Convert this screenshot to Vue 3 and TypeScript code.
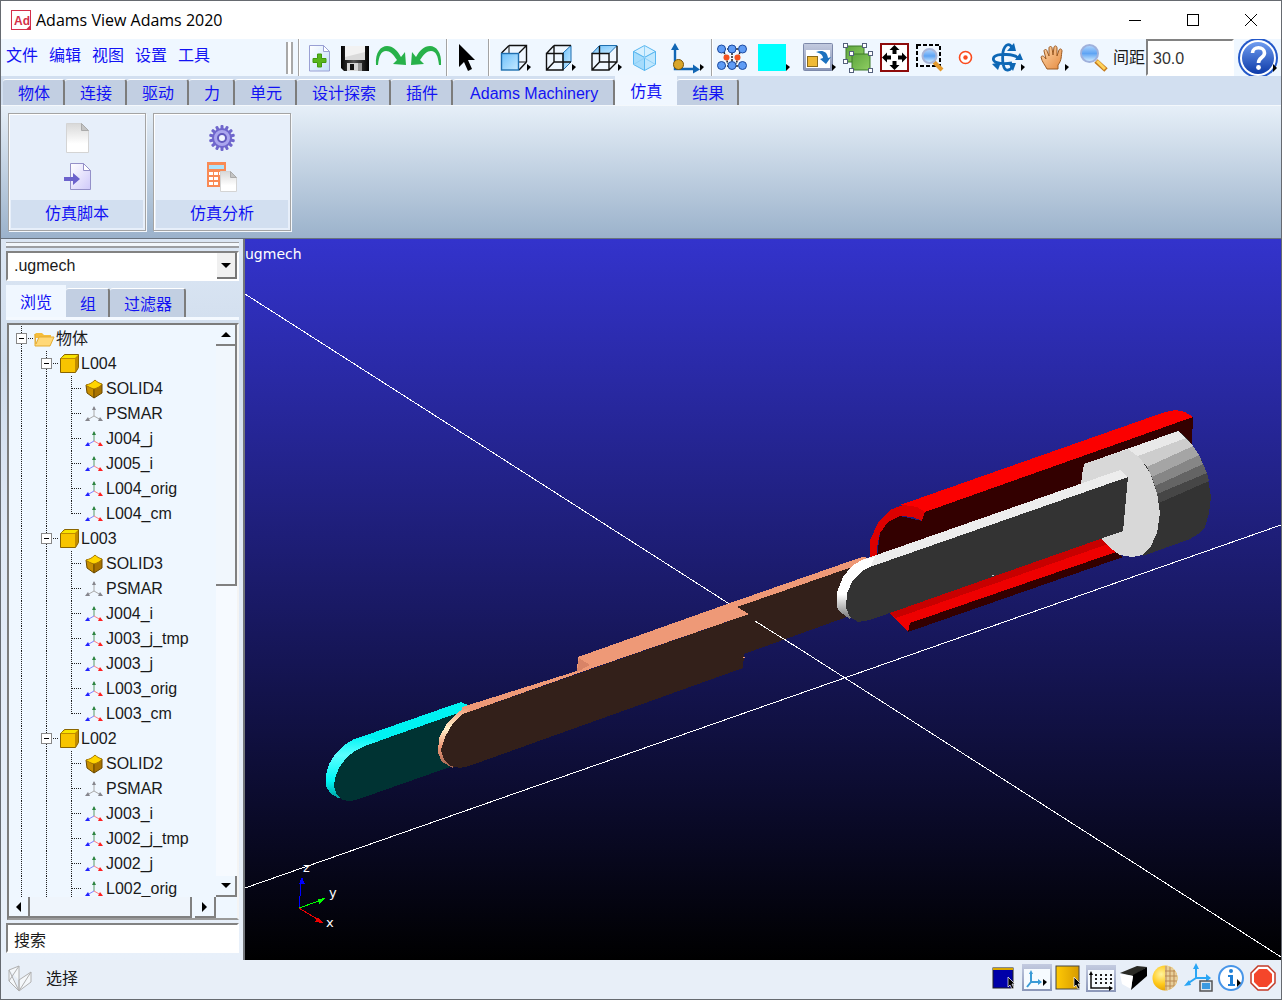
<script setup lang="ts">
import { computed, ref } from 'vue'

type IconKind = 'folder' | 'part' | 'solid' | 'marker' | 'grey-marker'

interface TreeRow {
  label: string
  level: number
  icon: IconKind
  last: boolean
}

interface Part {
  name: string
  complete: boolean
  children: string[]
}

const menus = ['文件', '编辑', '视图', '设置', '工具']

const ribbonTabs = ['物体', '连接', '驱动', '力', '单元', '设计探索', '插件', 'Adams Machinery', '仿真', '结果']
const activeRibbon = ref('仿真')

const browserTabs = ['浏览', '组', '过滤器']
const activeBrowser = ref('浏览')

const model = ref('.ugmech')
const spacing = ref('30.0')
const search = ref('搜索')

const parts: Part[] = [
  { name: 'L004', complete: true, children: ['SOLID4', 'PSMAR', 'J004_j', 'J005_i', 'L004_orig', 'L004_cm'] },
  { name: 'L003', complete: true, children: ['SOLID3', 'PSMAR', 'J004_i', 'J003_j_tmp', 'J003_j', 'L003_orig', 'L003_cm'] },
  { name: 'L002', complete: false, children: ['SOLID2', 'PSMAR', 'J003_i', 'J002_j_tmp', 'J002_j', 'L002_orig'] },
]

function iconFor(name: string): IconKind {
  if (name.startsWith('SOLID')) return 'solid'
  if (name === 'PSMAR') return 'grey-marker'
  return 'marker'
}

const rows = computed<TreeRow[]>(() => {
  const out: TreeRow[] = [{ label: '物体', level: 0, icon: 'folder', last: false }]
  for (const part of parts) {
    out.push({ label: part.name, level: 1, icon: 'part', last: false })
    part.children.forEach((child, i) => {
      out.push({
        label: child,
        level: 2,
        icon: iconFor(child),
        last: part.complete && i === part.children.length - 1,
      })
    })
  }
  return out
})

const gearTeeth = Array.from({ length: 14 }, (_, i) => (i * 360) / 14)
</script>

<template>
  <div class="app">
    <svg class="defs" width="0" height="0" aria-hidden="true">
      <defs>
        <linearGradient id="gPage" x1="0" y1="0" x2="1" y2="1"><stop offset="0" stop-color="#fff" /><stop offset="1" stop-color="#c4dffb" /></linearGradient>
        <linearGradient id="gGreyPage" x1="0" y1="0" x2="0" y2="1"><stop offset="0" stop-color="#d8d8d8" /><stop offset="0.7" stop-color="#fff" /></linearGradient>
        <linearGradient id="gLilac" x1="0" y1="0" x2="1" y2="1"><stop offset="0" stop-color="#fff" /><stop offset="1" stop-color="#cfc9fa" /></linearGradient>
        <linearGradient id="gFace" x1="0" y1="0" x2="1" y2="1"><stop offset="0" stop-color="#6cc0fb" /><stop offset="1" stop-color="#c8eaff" /></linearGradient>
        <linearGradient id="gGreen" x1="0" y1="0" x2="1" y2="1"><stop offset="0" stop-color="#5ea53e" /><stop offset="1" stop-color="#8fce62" /></linearGradient>
        <linearGradient id="gBar" x1="0" y1="0" x2="0" y2="1"><stop offset="0" stop-color="#c3cbe0" /><stop offset="1" stop-color="#8b97b8" /></linearGradient>
        <linearGradient id="gGold" x1="0" y1="0" x2="1" y2="0"><stop offset="0" stop-color="#ffc905" /><stop offset="1" stop-color="#d79b00" /></linearGradient>
        <linearGradient id="gHelp" x1="0" y1="0" x2="0" y2="1"><stop offset="0" stop-color="#6f9cf0" /><stop offset="1" stop-color="#0d3aa8" /></linearGradient>
        <linearGradient id="gHand" x1="0" y1="0" x2="1" y2="1"><stop offset="0" stop-color="#ffd9ae" /><stop offset="1" stop-color="#e58a3e" /></linearGradient>
        <linearGradient id="gLens" x1="0" y1="0" x2="0" y2="1"><stop offset="0" stop-color="#b5d8fd" /><stop offset="0.5" stop-color="#5ea4f4" /><stop offset="1" stop-color="#daf1ff" /></linearGradient>
        <linearGradient id="gFloppy" x1="0" y1="0" x2="1" y2="0"><stop offset="0" stop-color="#000" /><stop offset="0.45" stop-color="#555" /><stop offset="1" stop-color="#000" /></linearGradient>
        <radialGradient id="gBall" cx="0.35" cy="0.35" r="0.8"><stop offset="0" stop-color="#fff3a0" /><stop offset="0.5" stop-color="#ffc91a" /><stop offset="1" stop-color="#d89000" /></radialGradient>
      </defs>
    </svg>

    <header class="titlebar">
      <svg class="logo" width="21" height="20" viewBox="0 0 21 20">
        <rect x="1.500" y="0.500" width="19" height="19" fill="#fff" stroke="#d32f4a" stroke-width="1" />
        <path d="M16 19.500h4.500v-4.500z" fill="#d32f4a" />
        <text x="4" y="15" class="logo-text">Ad</text>
      </svg>
      <h1>Adams View Adams 2020</h1>
      <div class="window-buttons">
        <button type="button" aria-label="Minimize"><svg width="12" height="12" viewBox="0 0 12 12"><path d="M0 6.500h12" stroke="#000" /></svg></button>
        <button type="button" aria-label="Maximize"><svg width="12" height="12" viewBox="0 0 12 12"><rect x="0.500" y="0.500" width="11" height="11" fill="none" stroke="#000" /></svg></button>
        <button type="button" aria-label="Close"><svg width="12" height="12" viewBox="0 0 12 12"><path d="M0 0l12 12M12 0L0 12" stroke="#000" /></svg></button>
      </div>
    </header>

    <div class="toolbar">
      <nav class="menus">
        <button v-for="m in menus" :key="m" type="button">{{ m }}</button>
      </nav>
      <span class="grip"></span>
      <span class="sep"></span>
      <div class="tools">
        <button type="button" aria-label="New">
          <svg width="36" height="36" viewBox="0 0 36 36">
            <path d="M8.500 5.500h14l6 6v19.500h-20z" fill="url(#gPage)" stroke="#9aa0d4" />
            <path d="M22.500 5.500v6h6z" fill="#fff" stroke="#9aa0d4" />
            <path d="M16.500 14h4v4.500H25v4h-4.500V27h-4v-4.500H12v-4h4.500z" fill="#58b51c" stroke="#3f9a0c" />
          </svg>
        </button>
        <button type="button" aria-label="Save">
          <svg width="36" height="36" viewBox="0 0 36 36">
            <path d="M4 6h28v25H7l-3-3z" fill="url(#gFloppy)" />
            <rect x="8" y="6" width="20" height="14" fill="#f2f2f2" />
            <path d="M8 17l20-5v8H8z" fill="#dadada" />
            <rect x="10" y="23" width="15" height="8" fill="#d6d6d6" />
            <rect x="13" y="24" width="4" height="6" fill="#111" />
            <rect x="21" y="23" width="4" height="8" fill="#999" />
          </svg>
        </button>
        <button type="button" aria-label="Redo">
          <svg width="36" height="36" viewBox="0 0 36 36">
            <path d="M3 25C2 12 8 6 14 6c6 0 10 4 14 11l4-5 1 13-13-1 4-4C20 14 17 11 13 11c-5 0-7 5-8 14z" fill="#27b14a" />
          </svg>
        </button>
        <button type="button" aria-label="Undo">
          <svg width="36" height="36" viewBox="0 0 36 36">
            <path d="M32 25C33 12 27 6 21 6c-6 0-10 4-14 11l-4-5-1 13 13-1-4-4c4-6 7-9 11-9 5 0 7 5 8 14z" fill="#27b14a" />
          </svg>
        </button>
      </div>
      <span class="sep"></span>
      <div class="tools pointer">
        <button type="button" aria-label="Select">
          <svg width="36" height="36" viewBox="0 0 36 36"><path d="M9 4v23l5-5 4 9 4-2-4-9h7z" fill="#000" /></svg>
        </button>
      </div>
      <span class="sep"></span>
      <div class="tools views">
        <button type="button" class="drop" aria-label="Front view">
          <svg width="45" height="36" viewBox="0 0 45 36">
            <path d="M18 5.500h17.500V22M35.500 5.500L28 13M35.500 22L28 30M18 5.500L10.500 13" fill="none" stroke="#111" stroke-width="1.400" />
            <path d="M18 6v16h17" fill="none" stroke="#111" />
            <rect x="10.500" y="13.500" width="17" height="16.500" fill="url(#gFace)" stroke="#1f6fb0" stroke-width="1.400" />
            <path d="M36 24l4 3-4 4z" />
          </svg>
        </button>
        <button type="button" class="drop" aria-label="Right view">
          <svg width="45" height="36" viewBox="0 0 45 36">
            <path d="M35 5.500L27 13v17l8-8z" fill="url(#gFace)" stroke="#1f6fb0" />
            <path d="M10.500 13.500H27V30H10.500zM18 5.500h17M18 5.500L10.500 13.500M18 6v16h17M18 22l-7.500 8" fill="none" stroke="#111" stroke-width="1.400" />
            <path d="M36 24l4 3-4 4z" />
          </svg>
        </button>
        <button type="button" class="drop" aria-label="Top view">
          <svg width="45" height="36" viewBox="0 0 45 36">
            <path d="M18.500 5.500H36L28 13.500H11z" fill="url(#gFace)" stroke="#1f6fb0" />
            <path d="M11 13.500h17V30H11zM36 6v16l-8 8M18.500 6v16H36M18.500 22L11 30" fill="none" stroke="#111" stroke-width="1.400" />
            <path d="M37 24l4 3-4 4z" />
          </svg>
        </button>
        <button type="button" aria-label="Isometric view">
          <svg width="36" height="36" viewBox="0 0 36 36" stroke="#59b7f0">
            <path d="M18.500 5.500l11 6-11 6-11-6z" fill="#d6f0ff" />
            <path d="M7.500 11.500l11 6v13l-11-6z" fill="#a5dcfc" />
            <path d="M29.500 11.500l-11 6v13l11-6z" fill="#bfe7fe" />
            <path d="M18.500 18l-11 6.500M18.500 18l11 6.500M18.500 6v12" stroke="#8ed0f8" />
          </svg>
        </button>
        <button type="button" class="drop" aria-label="Set origin">
          <svg width="45" height="36" viewBox="0 0 45 36">
            <path d="M13 8v21H33" fill="none" stroke="#1166b4" stroke-width="2.400" />
            <path d="M13 3l4 7H9zM38 29.500l-7-5v9z" fill="#1166b4" />
            <circle cx="16.500" cy="24.500" r="5" fill="#d9a62a" stroke="#7a5408" />
            <path d="M38 24l4 3-4 4z" />
          </svg>
        </button>
      </div>
      <span class="sep"></span>
      <div class="tools">
        <button type="button" aria-label="Working grid">
          <svg width="36" height="36" viewBox="0 0 36 36">
            <path d="M7 9h22M7 26h22M10 12l4 12M26 12l-4 12M18 10v14" stroke="#222" stroke-width="1.500" stroke-dasharray="2 1" />
            <g fill="#5f9cf5" stroke="#1c4aa0"><circle cx="7.500" cy="9" r="4" /><circle cx="18" cy="9" r="4" /><circle cx="28.500" cy="9" r="4" /><circle cx="7.500" cy="25.500" r="4" /><circle cx="18" cy="25.500" r="4" /><circle cx="28.500" cy="25.500" r="4" /></g>
            <g fill="#f4511e"><circle cx="12.500" cy="17.500" r="3" /><circle cx="23.500" cy="17.500" r="3" /></g>
          </svg>
        </button>
        <button type="button" class="drop" aria-label="Colour">
          <svg width="45" height="36" viewBox="0 0 45 36"><rect x="8" y="4" width="28" height="27" fill="#00ffff" /><path d="M36 24l4 3-4 4z" /></svg>
        </button>
        <button type="button" class="drop" aria-label="Layout">
          <svg width="45" height="36" viewBox="0 0 45 36">
            <rect x="8.500" y="3.500" width="29" height="27" rx="1" fill="url(#gBar)" stroke="#7d89aa" />
            <rect x="11" y="10" width="24" height="18" fill="#fff" />
            <rect x="12.500" y="16.500" width="10" height="10" fill="#efb935" stroke="#8a6a1c" />
            <path d="M21 12c6-2 11-1 12 6l3-1-5 7-6-5 3-1c0-3-3-5-7-6z" fill="#1c72bf" />
            <path d="M37 24l4 3-4 4z" />
          </svg>
        </button>
        <button type="button" aria-label="Group">
          <svg width="36" height="36" viewBox="0 0 36 36">
            <rect x="6" y="6" width="18" height="16" fill="url(#gGreen)" stroke="#3d7a2a" />
            <rect x="12" y="14" width="18" height="16" fill="url(#gGreen)" stroke="#3d7a2a" />
            <g fill="#fff" stroke="#54617c"><rect x="3.500" y="3.500" width="4" height="4" /><rect x="22.500" y="3.500" width="4" height="4" /><rect x="3.500" y="19.500" width="4" height="4" /><rect x="9.500" y="11.500" width="4" height="4" /><rect x="28.500" y="11.500" width="4" height="4" /><rect x="9.500" y="28.500" width="4" height="4" /><rect x="28.500" y="28.500" width="4" height="4" /></g>
          </svg>
        </button>
        <button type="button" aria-label="Fit to view">
          <svg width="36" height="36" viewBox="0 0 36 36">
            <rect x="5" y="4" width="27" height="27" fill="#fff" stroke="#8e0b0b" stroke-width="2" />
            <path d="M18.500 5l5 5h-3v4h-4v-4h-3zM18.500 30l5-5h-3v-4h-4v4h-3zM6 17.500l5-5v3h4v4h-4v3zM31 17.500l-5-5v3h-4v4h4v3z" fill="#000" />
          </svg>
        </button>
        <button type="button" aria-label="Zoom area">
          <svg width="36" height="36" viewBox="0 0 36 36">
            <rect x="5" y="5" width="23" height="21" fill="none" stroke="#000" stroke-width="2" stroke-dasharray="4 2" />
            <path d="M22 22l8 8" stroke="#e59a2c" stroke-width="4" />
            <circle cx="17.500" cy="16" r="7" fill="url(#gLens)" stroke="#a9b6d8" stroke-width="2" />
          </svg>
        </button>
        <button type="button" aria-label="Centre">
          <svg width="36" height="36" viewBox="0 0 36 36"><circle cx="17.500" cy="17.500" r="6" fill="#fff" stroke="#fa4b1e" stroke-width="1.600" /><circle cx="17.500" cy="17.500" r="2.200" fill="#fa4b1e" /></svg>
        </button>
        <button type="button" class="drop" aria-label="Rotate">
          <svg width="45" height="36" viewBox="0 0 45 36">
            <path d="M28 8C26 3 21 3 19 12c-1 9 0 19 5 18 3 0 4-3 4-5M34 18c-3-4-20-5-24-1-3 5 5 8 18 6" fill="none" stroke="#0d67b5" stroke-width="2.800" />
            <path d="M23 11h9l-2-8zM31 20h8l-3-7zM24 23h8l-3 8zM8 24l9-2-3 8z" fill="#0d67b5" />
            <path d="M37 24l4 3-4 4z" />
          </svg>
        </button>
        <button type="button" class="drop" aria-label="Pan">
          <svg width="45" height="36" viewBox="0 0 45 36">
            <path d="M18 29c-2-4-5-7-6-12 1-2 3-1 5 2l-2-8c0-2 3-2 3 0l2 5V8c0-2 3-2 3 0l1 7 1-8c1-2 3-1 3 1v8l2-6c1-2 3-1 3 1-1 5 0 9-4 14v4z" fill="url(#gHand)" stroke="#9c5a22" />
            <path d="M36 24l4 3-4 4z" />
          </svg>
        </button>
        <button type="button" aria-label="Zoom">
          <svg width="36" height="36" viewBox="0 0 36 36">
            <path d="M22 21l10 9" stroke="#c47a1c" stroke-width="5" /><path d="M23 21l8 8" stroke="#ffd25a" stroke-width="3" />
            <circle cx="15.500" cy="13.500" r="8.500" fill="url(#gLens)" stroke="#9fb1dc" stroke-width="2" />
          </svg>
        </button>
      </div>
      <label class="spacing-label" for="spacing">间距</label>
      <input id="spacing" v-model="spacing" class="spacing" type="text" />
      <button type="button" class="help" aria-label="Help">
        <svg width="42" height="38" viewBox="0 0 42 38">
          <circle cx="20" cy="19" r="20" fill="#2358c9" /><circle cx="20" cy="19" r="18" fill="#fff" /><circle cx="20" cy="19" r="16" fill="url(#gHelp)" />
          <path d="M14.500 14c0-7 12-7 12 0 0 5-6 4-6 10" fill="none" stroke="#fff" stroke-width="3.600" /><circle cx="20.500" cy="28.500" r="2.400" fill="#fff" />
          <path d="M35 25l4 4-4 4z" />
        </svg>
      </button>
    </div>

    <div class="tabbar" role="tablist">
      <button
        v-for="t in ribbonTabs" :key="t" type="button" role="tab" class="tab"
        :class="{ active: t === activeRibbon, wide: t === 'Adams Machinery' }"
        :aria-selected="t === activeRibbon" @click="activeRibbon = t"
      >{{ t }}</button>
    </div>

    <section class="ribbon">
      <div class="group">
        <div class="group-icons">
          <button type="button" aria-label="New script">
            <svg width="32" height="32" viewBox="0 0 32 32"><path d="M5.500 1.500h15l7 7v22h-22z" fill="url(#gGreyPage)" stroke="#d4d4d4" /><path d="M20.500 1.500v7h7z" fill="#c4c4c4" stroke="#aaa" /></svg>
          </button>
          <button type="button" aria-label="Import script">
            <svg width="32" height="32" viewBox="0 0 32 32"><path d="M9.500 2.500h13l7 7v19h-20z" fill="url(#gLilac)" stroke="#9490c8" /><path d="M22.500 2.500v7h7z" fill="#fff" stroke="#9490c8" /><path d="M3 16h9v-4l7 6-7 6v-4H3z" fill="#6c62cc" /></svg>
          </button>
        </div>
        <div class="group-label">仿真脚本</div>
      </div>
      <div class="group">
        <div class="group-icons">
          <button type="button" aria-label="Run simulation">
            <svg width="32" height="32" viewBox="0 0 32 32">
              <g fill="#6f66cc"><rect v-for="a in gearTeeth" :key="a" x="14.500" y="3" width="3" height="6" rx="1" :transform="`rotate(${a} 16 16)`" /></g>
              <circle cx="16" cy="16" r="9" fill="#aaa5ee" stroke="#6f66cc" stroke-width="2" /><circle cx="16" cy="16" r="4" fill="#f0f4ff" stroke="#6158be" stroke-width="2" />
            </svg>
          </button>
          <button type="button" aria-label="Calculate">
            <svg width="32" height="32" viewBox="0 0 32 32">
              <rect x="1" y="1" width="19" height="25" fill="#f98a55" /><rect x="3" y="4" width="15" height="4" fill="#aee3fb" />
              <g fill="#fff"><rect x="3" y="11" width="4" height="3" /><rect x="8" y="11" width="4" height="3" /><rect x="13" y="11" width="4" height="3" /><rect x="3" y="16" width="4" height="3" /><rect x="8" y="16" width="4" height="3" /><rect x="3" y="21" width="4" height="3" /><rect x="8" y="21" width="4" height="3" /></g>
              <path d="M14.500 10.500h10l6 6v14h-16z" fill="url(#gGreyPage)" stroke="#d4d4d4" /><path d="M24.500 10.500v6h6z" fill="#c4c4c4" stroke="#aaa" />
            </svg>
          </button>
        </div>
        <div class="group-label">仿真分析</div>
      </div>
    </section>

    <main class="workspace">
      <aside class="sidebar">
        <div class="side-grip"></div>
        <div class="combo">
          <select v-model="model" aria-label="Model"><option>.ugmech</option></select>
          <span class="combo-arrow"><svg width="10" height="5" viewBox="0 0 10 5"><path d="M0 0h10L5 5z" /></svg></span>
        </div>
        <div class="side-tabs" role="tablist">
          <button
            v-for="t in browserTabs" :key="t" type="button" role="tab" class="tab side"
            :class="{ active: t === activeBrowser }" :aria-selected="t === activeBrowser" @click="activeBrowser = t"
          >{{ t }}</button>
        </div>
        <div class="tree-box">
          <div class="tree-main">
            <ul class="tree">
              <li v-for="(r, i) in rows" :key="i" class="row">
                <span v-for="n in r.level" :key="n" class="cell line"></span>
                <span v-if="r.level < 2" class="cell node line"><i class="dots"></i><b class="box"></b></span>
                <span v-else class="cell line" :class="{ end: r.last }"><i class="dots"></i></span>
                <svg v-if="r.icon === 'folder'" class="ticon" width="22" height="24" viewBox="0 0 22 24"><path d="M1 7l1-1h6l2 2h7v3H1z" fill="#f5bd3b" /><path d="M1 7v12h15l4-9H5l-3 7z" fill="#ffd878" stroke="#e5ad33" /></svg>
                <svg v-else-if="r.icon === 'part'" class="ticon" width="22" height="24" viewBox="0 0 22 24"><path d="M1.500 6.500l4-4h14v13l-3 5h-15z" fill="#c18c00" stroke="#8a6500" /><path d="M2 6l4-3h13l-3 3z" fill="#f8e300" /><rect x="2" y="7" width="14" height="13" fill="#f8c400" /></svg>
                <svg v-else-if="r.icon === 'solid'" class="ticon" width="22" height="24" viewBox="0 0 22 24"><path d="M2 8l8 4v9l-7-5z" fill="#c98f00" stroke="#6c4b00" /><path d="M10 12l8-5v9l-8 5z" fill="#a87200" stroke="#6c4b00" /><path d="M2 8c4-1 6-2 9-5 2 2 4 3 7 4-2 3-5 4-8 5-3-1-6-2-8-4z" fill="#ffd500" stroke="#a87800" /></svg>
                <svg v-else class="ticon" :class="r.icon" width="22" height="24" viewBox="0 0 22 24">
                  <path class="az" d="M10 14V5" /><path class="ax" d="M10 14l7 4" /><path class="ay" d="M10 14l-7 4" />
                  <path class="fz" d="M8 8l2-4 2 4z" /><path class="fx" d="M14 19l5 0-3-4z" /><path class="fy" d="M4 15l-3 4 5 0z" />
                </svg>
                <span class="tlabel">{{ r.label }}</span>
              </li>
            </ul>
            <div class="vscroll">
              <button type="button" class="sbtn" aria-label="Scroll up"><svg width="10" height="5" viewBox="0 0 10 5"><path d="M0 5h10L5 0z" /></svg></button>
              <div class="vthumb"></div>
              <div class="vtrack"></div>
              <button type="button" class="sbtn" aria-label="Scroll down"><svg width="10" height="5" viewBox="0 0 10 5"><path d="M0 0h10L5 5z" /></svg></button>
            </div>
          </div>
          <div class="hscroll">
            <button type="button" class="sbtn" aria-label="Scroll left"><svg width="5" height="10" viewBox="0 0 5 10"><path d="M5 0v10L0 5z" /></svg></button>
            <div class="hthumb"></div>
            <button type="button" class="sbtn" aria-label="Scroll right"><svg width="5" height="10" viewBox="0 0 5 10"><path d="M0 0v10l5-5z" /></svg></button>
          </div>
        </div>
        <input v-model="search" class="search" type="text" aria-label="搜索" />
      </aside>

      <section class="viewport">
        <svg class="scene" viewBox="245 239 1036 721" preserveAspectRatio="xMidYMid slice" shape-rendering="crispEdges">
          <defs>
            <linearGradient id="rimW" x1="0" y1="0" x2="0" y2="1"><stop offset="0.6" stop-color="#fff" /><stop offset="1" stop-color="#777" /></linearGradient>
            <linearGradient id="rimC" x1="0" y1="0" x2="0" y2="1"><stop offset="0" stop-color="#00f4f4" /><stop offset="0.3" stop-color="#5cffff" /><stop offset="0.7" stop-color="#00f6f6" /><stop offset="1" stop-color="#009a9a" /></linearGradient>
            <linearGradient id="rimS" x1="0" y1="0" x2="0" y2="1"><stop offset="0" stop-color="#ee9877" /><stop offset="0.35" stop-color="#fff2cc" /><stop offset="0.65" stop-color="#ee9877" /><stop offset="1" stop-color="#9b6350" /></linearGradient>
          </defs>
          <text x="245" y="259" class="scene-text big">ugmech</text>
          <path d="M245 294L1281 957M245 888L1281 525" stroke="#fff" stroke-width="1" />

          <polygon points="352,740 461,702 470,706 470,712 458,713 356,749" fill="#00f2f2" />
          <path d="M365 736L353 740 344 745 336 753 329 764 326 775V786L330 793 338 798 350 800 362 749 380 742z" fill="url(#rimC)" />
          <polygon points="365,746 355,751 346,758 339,768 335,778 334,787 337,795 342,800 349,801 356,800 450,767 470,710 458,713" fill="#003333" />

          <polygon points="578,657 730,603 862,557 870,558 870,566 737,607 749,614 590,669 463,714 462,707 577,671" fill="#ee9977" />
          <polygon points="579,658 590,665 577,672" fill="#d98467" />
          <path d="M471 707L460 711 447 723 439 738 438 753 442 762 453 768 466 714z" fill="url(#rimS)" />
          <polygon points="463,714 749,614 737,607 858,565 880,565 880,605 744,654 743,668 469,766 460,768 451,766 444,760 441,750 445,737 453,723" fill="#33201a" />
          <path d="M755 621L798 648" stroke="#fff" stroke-width="1" />

          <polygon points="877,557 880,533 888,522 900,516 922,521 925,512 1193,417 1192,442 1170,520 877,590" fill="#330000" />
          <polygon points="900,505 1165,412 1175,410 1185,412 1193,417 925,512 914,508" fill="#fb0000" />
          <polygon points="870,558 870,540 878,523 890,510 903,505 917,507 925,512 922,521 913,517 900,516 888,522 880,533 877,547 877,558" fill="#dd0000" />
          <polygon points="889,613 1100,538 1116,552 910,623 908,632" fill="#ee0000" />
          <polygon points="889,613 1100,538 1108,544 896,618" fill="#c80000" />
          <polygon points="910,623 1116,552 1123,557 908,632" fill="#330000" />

          <polygon points="1128,449 1177,431 1181,433 1190,442 1200,457 1207,473 1211,497 1209,513 1205,527 1198,534 1190,539 1143,556" fill="#333" />
          <polygon points="1084,464 1178,431 1186,438 1140,458" fill="#e9e9e9" />
          <polygon points="1138,456 1186,438 1193,446 1147,467" fill="#cdcdcd" />
          <polygon points="1147,467 1193,446 1199,455 1152,477" fill="#a5a5a5" />
          <polygon points="1152,477 1199,455 1203,464 1155,486" fill="#868686" />
          <polygon points="1155,486 1203,464 1207,473 1157,494" fill="#646464" />
          <polygon points="1157,494 1207,473 1209,481 1159,503" fill="#464646" />
          <polygon points="1084,464 1128,449 1140,458 1150,473 1157,493 1160,513 1157,533 1150,548 1142,555 1132,557 1120,555 1110,548 1100,538 1081,485 1082,475" fill="#d8d8d8" />

          <polygon points="862,560 1120,470 1128,477 870,568" fill="#ededed" />
          <path d="M875 557L862 560 852 566 843 577 837 592V607L840 612 850 619 870 568z" fill="url(#rimW)" />
          <polygon points="870,567 1128,477 1123,531 870,620 858,622 850,617 846,608 847,593 853,580 862,571" fill="#333" />
          <rect x="992" y="575" width="2" height="1" fill="#ccc" />
          <rect x="743" y="657" width="2" height="1" fill="#ee9977" />

          <path d="M299 908L301 884" stroke="#00f" stroke-width="1" /><path d="M302 877l3 7h-6z" fill="#00f" />
          <path d="M299 908l20-7" stroke="#0f0" stroke-width="1" /><path d="M326 898l-7 6-1-5z" fill="#0f0" />
          <path d="M299 908l18 11" stroke="#e00" stroke-width="1" /><path d="M323 923l-8-1 3-5z" fill="#e00" />
          <text x="303" y="872" class="scene-text">z</text>
          <text x="329" y="897" class="scene-text">y</text>
          <text x="326" y="927" class="scene-text">x</text>
        </svg>
      </section>
    </main>

    <footer class="statusbar">
      <svg width="26" height="28" viewBox="0 0 26 28"><path d="M2 6l10-4v25L2 17zM2 6l10 21 12-9V8l-12 8M12 27L24 8M2 17L12 2M12 16v11" fill="#fbfbfb" fill-opacity="0.600" stroke="#b0b0b0" /></svg>
      <span class="status-text">选择</span>
      <div class="status-icons">
        <button type="button" aria-label="Background"><svg width="32" height="32" viewBox="0 0 32 32"><rect x="2" y="6" width="20" height="20" fill="#0000a8" stroke="#222" /><path d="M2 7h20" stroke="#d9a800" stroke-width="2" /><path d="M17 15v10l2-2 2 4 2-1-2-4h3z" fill="#000" stroke="#fff" stroke-width="0.700" /></svg></button>
        <button type="button" aria-label="Triad"><svg width="32" height="32" viewBox="0 0 32 32"><rect x="-1" y="2" width="30" height="27" fill="url(#gBar)" /><rect x="1" y="7" width="26" height="20" fill="#f6fbff" /><path d="M8 11v9h9M8 20l-4 5" fill="none" stroke="#3a9bd6" stroke-width="2" /><path d="M6 12l2-4 2 4zM15 17l4 3-4 3z" fill="#3a9bd6" /><path d="M20 17l4 3-4 4z" /></svg></button>
        <button type="button" aria-label="Colour window"><svg width="32" height="32" viewBox="0 0 32 32"><rect x="1" y="4" width="23" height="23" fill="url(#gGold)" stroke="#444" /><path d="M19 15v10l2-2 2 4 2-1-2-4h3z" fill="#000" stroke="#fff" stroke-width="0.700" /></svg></button>
        <button type="button" aria-label="Grid"><svg width="32" height="32" viewBox="0 0 32 32"><rect x="-1" y="3" width="30" height="27" fill="url(#gBar)" /><rect x="1" y="8" width="26" height="20" fill="#f6fbff" /><path d="M4 12v14h19" fill="none" stroke="#111" stroke-width="1.500" /><path d="M2 13l2-4 2 4zM22 24l4 2-4 3z" /><path d="M9 12v12M14 12v12M19 12v12M24 12v10" stroke="#222" stroke-width="2" stroke-dasharray="2 2" /></svg></button>
        <button type="button" aria-label="Perspective"><svg width="32" height="32" viewBox="0 0 32 32"><path d="M1 11l17-7 10 1-14 9z" fill="#2a2a24" /><path d="M14 13l14-8v9L12 28z" fill="#000" /><path d="M1 12l13 2-2 13-9-5z" fill="#fff" /></svg></button>
        <button type="button" aria-label="Shading"><svg width="32" height="32" viewBox="0 0 32 32"><circle cx="14" cy="16" r="12.500" fill="url(#gBall)" /><path d="M14 3.500a12.500 12.500 0 0 1 0 25z" fill="#e8cf9a" /><path d="M15 4v24M19 5v22M23 8v16M14 9h10M14 14h12M14 19h12M14 24h9" stroke="#b98a54" /></svg></button>
        <button type="button" aria-label="Coordinates"><svg width="32" height="32" viewBox="0 0 32 32"><path d="M13 16V5M13 16h11M13 16L4 22" stroke="#2aa6f5" stroke-width="2" /><path d="M10 7l3-6 3 6zM23 12l5 4-5 4zM6 18l-5 6 7-1z" fill="#2aa6f5" /><rect x="17" y="19" width="12" height="10" fill="#d8e4ee" stroke="#555" stroke-width="1.500" /><rect x="19" y="21" width="8" height="6" fill="#3b9ae0" /></svg></button>
        <button type="button" aria-label="Information"><svg width="32" height="32" viewBox="0 0 32 32"><circle cx="16" cy="16" r="12" fill="#fff" stroke="#4795e8" stroke-width="2" /><circle cx="16" cy="9" r="2" fill="#1f7fd6" /><path d="M13 13h5v9h2v2h-7v-2h2v-7h-2z" fill="#1f7fd6" /><path d="M22 17l4 4-4 4z" /></svg></button>
        <button type="button" aria-label="Stop"><svg width="32" height="32" viewBox="0 0 32 32"><path d="M11 4h10l7 7v10l-7 7H11l-7-7V11z" fill="#fff" stroke="#c33a26" stroke-width="1.500" /><path d="M12 7h8l5 5v8l-5 5h-8l-5-5v-8z" fill="#f4462a" /></svg></button>
      </div>
    </footer>
  </div>
</template>

<style>
body {
  margin: 0;
}
</style>

<style scoped>
* {
  box-sizing: border-box;
}
.app {
  display: flex;
  flex-direction: column;
  height: 100vh;
  min-height: 600px;
  overflow: hidden;
  border: 1px solid #666a70;
  background: #e8eff8;
  color: #1a1a1a;
  font: 16px/20px "Liberation Sans", "Noto Sans CJK SC", sans-serif;
}
.defs {
  position: absolute;
}
button {
  margin: 0;
  padding: 0;
  border: 0;
  background: none;
  color: inherit;
  font: inherit;
}
svg {
  display: block;
  flex: none;
}
.titlebar {
  display: flex;
  align-items: center;
  height: 38px;
  flex: none;
  padding: 0 1px 0 9px;
  background: #fff;
  color: #000;
}
.logo-text {
  font: bold 12px "Liberation Sans", sans-serif;
  fill: #d32f4a;
}
h1 {
  margin: 0 0 0 5px;
  font: 16px/24px "Open Sans", "Noto Sans", sans-serif;
}
.window-buttons {
  display: flex;
  margin-left: auto;
}
.window-buttons button {
  display: flex;
  align-items: center;
  justify-content: center;
  width: 58px;
  height: 38px;
}
.toolbar {
  display: flex;
  align-items: center;
  height: 37px;
  flex: none;
  background: #eff7ff;
}
.menus {
  display: flex;
  gap: 11px;
  width: 285px;
  padding: 0 0 3px 5px;
  flex: none;
}
.menus button {
  color: #1212f4;
}
.grip {
  width: 7px;
  height: 32px;
  flex: none;
  margin-right: 4px;
  border: solid #a8a8a8;
  border-width: 0 2px;
  background: #fff;
}
.sep {
  width: 4px;
  align-self: stretch;
  flex: none;
  border-left: 1px solid #eff7ff;
  background: linear-gradient(to right, #a3a3a3 1px, #fff 1px 2px, transparent 2px);
}
.tools {
  display: flex;
  flex: none;
}
.tools button {
  width: 36px;
  height: 36px;
}
.tools button.drop {
  width: 45px;
}
.pointer {
  padding: 0 1px;
}
.views {
  padding-right: 3px;
}
.spacing-label {
  flex: none;
  margin: 0 1px 0 3px;
  white-space: nowrap;
}
.spacing {
  align-self: flex-start;
  width: 88px;
  height: 37px;
  flex: none;
  padding: 3px 5px 0;
  border: solid #fff;
  border-width: 2px;
  border-top-color: #828282;
  border-left-color: #828282;
  background: #fff;
  color: #333;
  font: inherit;
}
.help {
  margin-left: auto;
  width: 43px;
  height: 37px;
  flex: none;
  overflow: hidden;
}
.tabbar {
  display: flex;
  align-items: flex-end;
  height: 30px;
  flex: none;
  padding-left: 2px;
  background: #d2dff0;
  border-bottom: 1px solid #f4f8fc;
}
.tab {
  height: 26px;
  padding: 2px 13px 0 15px;
  border: solid #fff;
  border-width: 1px 0 0;
  border-right: 2px solid #7c7c7c;
  border-radius: 3px 3px 0 0;
  background: #c2cfe2;
  color: #1212f4;
  white-space: nowrap;
}
.tab.active {
  height: 30px;
  padding: 2px 15px 0;
  border-right-width: 0;
  border-radius: 0;
  border-color: #f0f7ff;
  background: #f0f7ff;
}
.tab.wide {
  padding: 2px 15px 0 17px;
}
.ribbon {
  display: flex;
  gap: 7px;
  height: 133px;
  flex: none;
  padding: 7px;
  border-bottom: 1px solid #68727e;
  background: linear-gradient(#e6eff8, #9bb2cb);
}
.group {
  display: flex;
  flex-direction: column;
  width: 138px;
  height: 118px;
  padding: 2px;
  border: 1px solid #a4a4a4;
  box-shadow: 1px 1px 0 #f4f8fc, inset 1px 1px 0 #fff;
  background: #e7effa;
}
.group-icons {
  display: flex;
  flex: 1;
  flex-direction: column;
  align-items: center;
  justify-content: center;
  gap: 7px;
  padding-bottom: 2px;
}
.group-label {
  height: 28px;
  background: #d2dff0;
  color: #1212f4;
  text-align: center;
  line-height: 28px;
}
.workspace {
  display: flex;
  flex: 1;
  min-height: 0;
}
.sidebar {
  display: flex;
  flex-direction: column;
  width: 244px;
  flex: none;
  padding: 3px 4px 7px 5px;
  border-right: 2px solid #74777c;
  background: linear-gradient(#dbe6f4, #dbe6f4 14px, #cfdcec 120px, #e0e9f6 300px, #e8f0fa);
}
.side-grip {
  height: 6px;
  flex: none;
  margin: 0 0 3px;
  border: solid #9c9ea2;
  border-width: 1px 0 2px;
  background: #f2f7fc;
}
.combo {
  display: flex;
  height: 30px;
  flex: none;
  border: 2px solid #fff;
  border-top-color: #828282;
  border-left-color: #828282;
  background: #fff;
}
.combo select {
  flex: 1;
  min-width: 0;
  padding: 0 6px;
  border: 0;
  appearance: none;
  background: #fff;
  color: #1a1a1a;
  font: inherit;
}
.combo-arrow {
  display: flex;
  align-items: center;
  justify-content: center;
  width: 20px;
  border: solid #777;
  border-width: 0 2px 2px 0;
  background: #f0f0f0;
}
.side-tabs {
  display: flex;
  align-items: flex-end;
  height: 39px;
  flex: none;
  border-bottom: 3px solid #f4f9ff;
}
.tab.side {
  height: 29px;
  padding: 3px 12px 0 14px;
}
.tab.side.active {
  height: 32px;
  padding: 2px 14px 0;
}
.tree-box {
  display: flex;
  flex: 1;
  flex-direction: column;
  min-height: 0;
  margin: 3px 0 3px 1px;
  border: 2px solid #7c7c7c;
  border-right-color: #f4f4f4;
  border-bottom-color: #9a9a9a;
  background: #eff7ff;
}
.tree-main {
  display: flex;
  flex: 1;
  min-height: 0;
}
.tree {
  flex: 1;
  min-width: 0;
  margin: 0;
  padding: 1px 0 0;
  overflow: hidden;
  list-style: none;
}
.row {
  display: flex;
  align-items: center;
  height: 25px;
}
.cell {
  display: flex;
  align-items: center;
  justify-content: flex-end;
  width: 25px;
  height: 25px;
  flex: none;
}
.line {
  background: repeating-linear-gradient(to bottom, #222 0 1px, transparent 1px 2px) 12px 0 / 1px 100% no-repeat;
}
.line.end {
  background-size: 1px 13px;
}
.dots {
  width: 10px;
  height: 1px;
  margin-right: 2px;
  background: repeating-linear-gradient(to right, #222 0 1px, transparent 1px 2px);
}
.node {
  flex-direction: row-reverse;
  justify-content: flex-start;
}
.node .dots {
  width: 5px;
  margin-right: 1px;
}
.box {
  width: 11px;
  height: 11px;
  margin-right: 1px;
  border: 1px solid #888;
  background: linear-gradient(#000, #000) center / 5px 1px no-repeat #fff;
}
.marker .az { stroke: #5a9c68; }
.marker .ax { stroke: #ff8080; }
.marker .ay { stroke: #8080ff; }
.marker .fz { fill: #2c8440; }
.marker .fx { fill: #ff2020; }
.marker .fy { fill: #2020ff; }
.grey-marker .az,
.grey-marker .ax,
.grey-marker .ay { stroke: #aaa; }
.grey-marker .fz,
.grey-marker .fx,
.grey-marker .fy { fill: #85858c; }
.tlabel {
  white-space: nowrap;
}
.vscroll {
  display: flex;
  flex-direction: column;
  width: 21px;
  flex: none;
}
.sbtn {
  display: flex;
  align-items: center;
  justify-content: center;
  width: 21px;
  height: 21px;
  flex: none;
  border: solid #808080;
  border-width: 0 2px 2px 0;
  background: #eff7ff;
}
.vthumb {
  flex: 9;
  border: solid #808080;
  border-width: 0 2px 2px 0;
  background: #f1f7fd;
}
.vtrack {
  flex: 11;
  background: #f6faff;
}
.hscroll {
  display: flex;
  height: 21px;
  flex: none;
  padding-right: 21px;
}
.hthumb {
  flex: 1;
  margin-right: 3px;
  border: solid #808080;
  border-width: 0 2px 2px 0;
  background: #eff5fc;
}
.search {
  width: 100%;
  height: 30px;
  flex: none;
  padding: 2px 6px 0;
  border: 2px solid #fff;
  border-top-color: #828282;
  border-left-color: #828282;
  background: #fff;
  color: #1a1a1a;
  font: inherit;
}
.viewport {
  flex: 1;
  min-width: 0;
  background: linear-gradient(#3333cc, #000);
}
.scene {
  width: 100%;
  height: 100%;
}
.scene-text {
  fill: #fff;
  font: 13px "DejaVu Sans", sans-serif;
}
.scene-text.big {
  font-size: 14px;
}
.statusbar {
  display: flex;
  align-items: center;
  height: 39px;
  flex: none;
  padding: 0 2px 3px 6px;
  background: #e8eff8;
}
.status-text {
  margin: 2px 0 0 13px;
}
.status-icons {
  display: flex;
  margin-left: auto;
}
.status-icons svg {
  overflow: visible;
}
</style>
